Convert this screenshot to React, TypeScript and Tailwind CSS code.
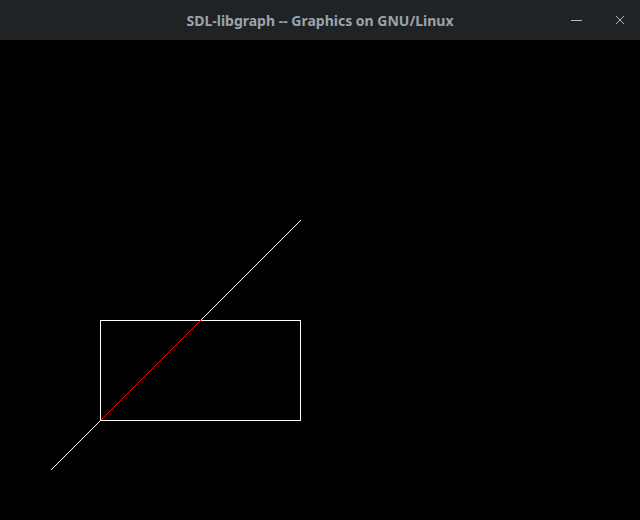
import React from 'react';

const Canvas = () => (
  <svg width="640" height="480" viewBox="0 0 640 480" shapeRendering="crispEdges" className="block">
    <rect x="0" y="0" width="640" height="480" fill="#000000" />
    {/* rectangle window */}
    <rect x="100.5" y="280.5" width="200" height="100" fill="none" stroke="#ffffff" strokeWidth="1" />
    {/* line, clipped part drawn red */}
    <line x1="50.5" y1="430.5" x2="100.5" y2="380.5" stroke="#ffffff" strokeWidth="1" />
    <line x1="200.5" y1="280.5" x2="300.5" y2="180.5" stroke="#ffffff" strokeWidth="1" />
    <line x1="100.5" y1="380.5" x2="200.5" y2="280.5" stroke="#ff0000" strokeWidth="1" />
  </svg>
);

const App = () => {
  return (
    <div className="w-[640px] h-[520px] bg-black flex flex-col overflow-hidden">
      <div className="h-[40px] bg-[#202326] flex items-center relative shrink-0">
        <div
          className="flex-1 text-center text-[14px] font-bold text-[#9ba3ab]"
          style={{ fontFamily: '"Noto Sans", "Open Sans", sans-serif' }}
        >
          SDL-libgraph -- Graphics on GNU/Linux
        </div>
        <div className="absolute right-0 top-0 h-[40px] flex items-center">
          <div className="w-[48px] h-[40px] flex items-center justify-center">
            <div className="w-[11px] h-px bg-[#b8bcc0]" />
          </div>
          <div className="w-[40px] h-[40px] flex items-center justify-center">
            <svg width="10" height="10" viewBox="0 0 10 10">
              <path d="M1 1 L9 9 M9 1 L1 9" stroke="#aeb3b8" strokeWidth="1" />
            </svg>
          </div>
        </div>
      </div>
      <Canvas />
    </div>
  );
};

export default App;
